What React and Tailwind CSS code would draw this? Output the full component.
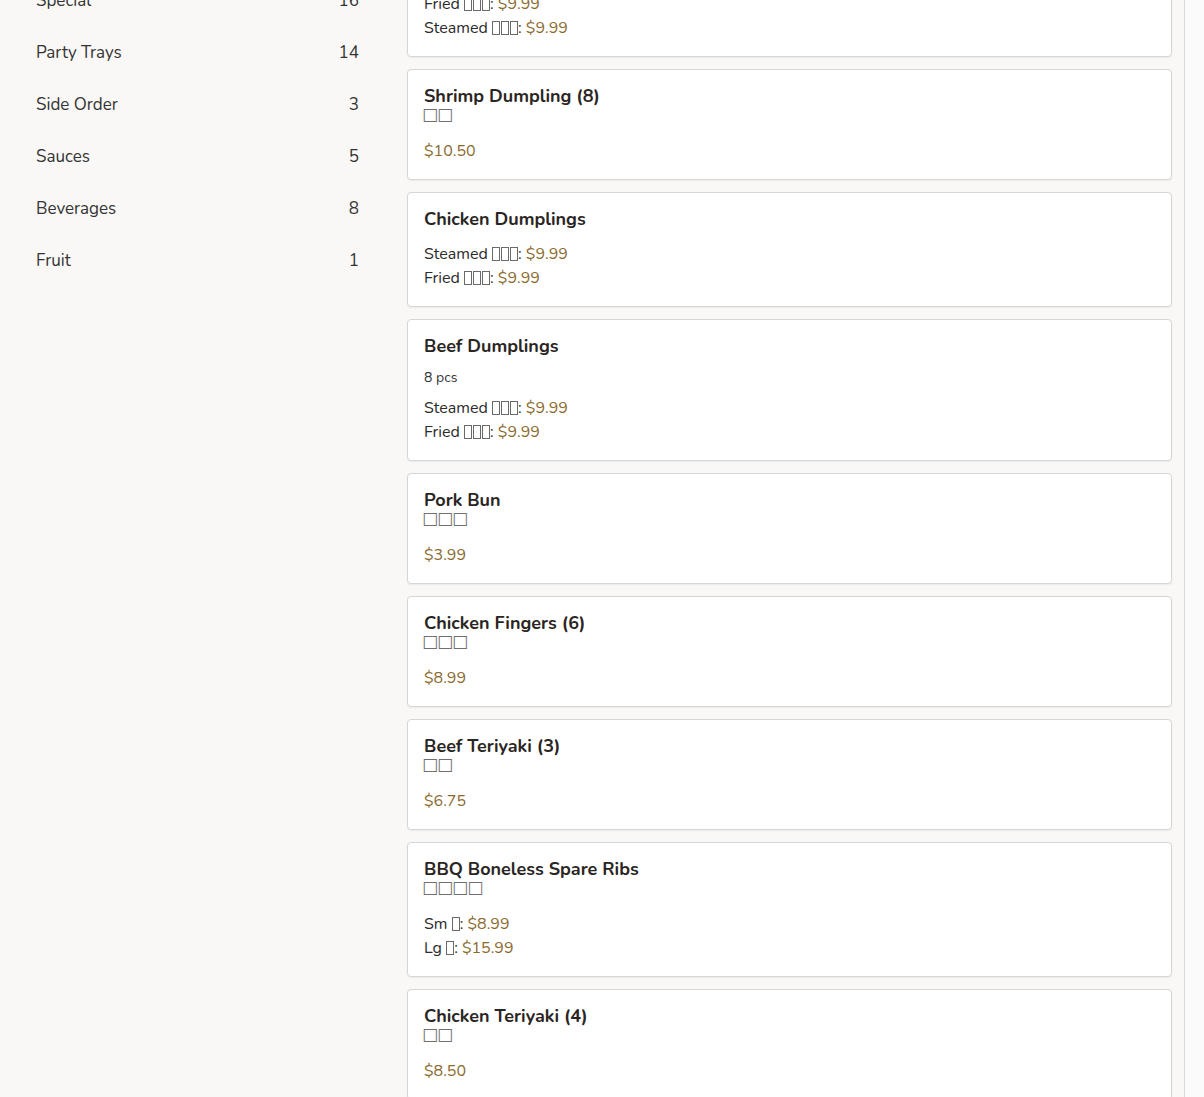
import React from "react";

const font = { fontFamily: "Nunito, Lato, 'Noto Sans', sans-serif" };

const cats = [
  ["Special", 16],
  ["Party Trays", 14],
  ["Side Order", 3],
  ["Sauces", 5],
  ["Beverages", 8],
  ["Fruit", 1],
];

const T = ({ n }) => (
  <span className="inline-flex gap-[1px] align-[-2px]">
    {Array.from({ length: n }).map((_, i) => (
      <span key={i} className="inline-block w-[8px] h-[14px] border border-[#6a6a6a]" />
    ))}
  </span>
);

const Sub = ({ n }) => (
  <div className="h-5 leading-[14px] text-[17px] text-[#707070] font-['DejaVu_Sans'] tracking-[-1px] -ml-[2px]">
    {"□".repeat(n)}
  </div>
);

const PriceLine = ({ label, n, price }) => (
  <div className="h-6 leading-6 text-[16px] text-[#2b2b2b]">
    {label} <T n={n} />: <span className="text-[#8a6a2e]">{price}</span>
  </div>
);

const Card = ({ title, sub, note, lines }) => (
  <div className="bg-white border border-[#d6d6d6] rounded-[4px] shadow-[0_1px_2px_rgba(0,0,0,0.06)] px-4 pt-4 pb-4">
    <div className="h-[21px] leading-5 text-[18px] font-bold text-[#2a2522]">{title}</div>
    {sub ? <Sub n={sub} /> : null}
    {note ? <div className="mt-[11px] h-5 leading-5 text-[14px] text-[#333]">{note}</div> : null}
    <div className={note ? "mt-2" : "mt-3"}>
      {lines.map((l, i) =>
        l.label ? (
          <PriceLine key={i} label={l.label} n={l.n} price={l.price} />
        ) : (
          <div key={i} className="h-6 leading-6 text-[16px] text-[#8a6a2e]">{l.price}</div>
        )
      )}
    </div>
  </div>
);

export default function App() {
  return (
    <div style={font} className="w-[1204px] h-[1097px] overflow-hidden bg-[#f9f8f6] flex">
      <div className="w-[391px] shrink-0 pl-[36px] pr-[32px]">
        <div className="-mt-[25px]">
          {cats.map(([n, c]) => (
            <div key={n} className="flex justify-between items-center py-[14px] leading-6 text-[17px] text-[#333]">
              <span>{n}</span>
              <span>{c}</span>
            </div>
          ))}
        </div>
      </div>
      <div className="flex-1 pl-4 pr-3">
        <div className="-mt-[58px] flex flex-col gap-[12px]">
          <Card
            title="Pork Dumplings"
            lines={[
              { label: "Fried", n: 3, price: "$9.99" },
              { label: "Steamed", n: 3, price: "$9.99" },
            ]}
          />
          <Card title="Shrimp Dumpling (8)" sub={2} lines={[{ price: "$10.50" }]} />
          <Card
            title="Chicken Dumplings"
            lines={[
              { label: "Steamed", n: 3, price: "$9.99" },
              { label: "Fried", n: 3, price: "$9.99" },
            ]}
          />
          <Card
            title="Beef Dumplings"
            note="8 pcs"
            lines={[
              { label: "Steamed", n: 3, price: "$9.99" },
              { label: "Fried", n: 3, price: "$9.99" },
            ]}
          />
          <Card title="Pork Bun" sub={3} lines={[{ price: "$3.99" }]} />
          <Card title="Chicken Fingers (6)" sub={3} lines={[{ price: "$8.99" }]} />
          <Card title="Beef Teriyaki (3)" sub={2} lines={[{ price: "$6.75" }]} />
          <Card
            title="BBQ Boneless Spare Ribs"
            sub={4}
            lines={[
              { label: "Sm", n: 1, price: "$8.99" },
              { label: "Lg", n: 1, price: "$15.99" },
            ]}
          />
          <Card title="Chicken Teriyaki (4)" sub={2} lines={[{ price: "$8.50" }]} />
        </div>
      </div>
      <div className="w-[20px] shrink-0 border-l border-[#d9d9d9] bg-[#fbfbfb]" />
    </div>
  );
}
